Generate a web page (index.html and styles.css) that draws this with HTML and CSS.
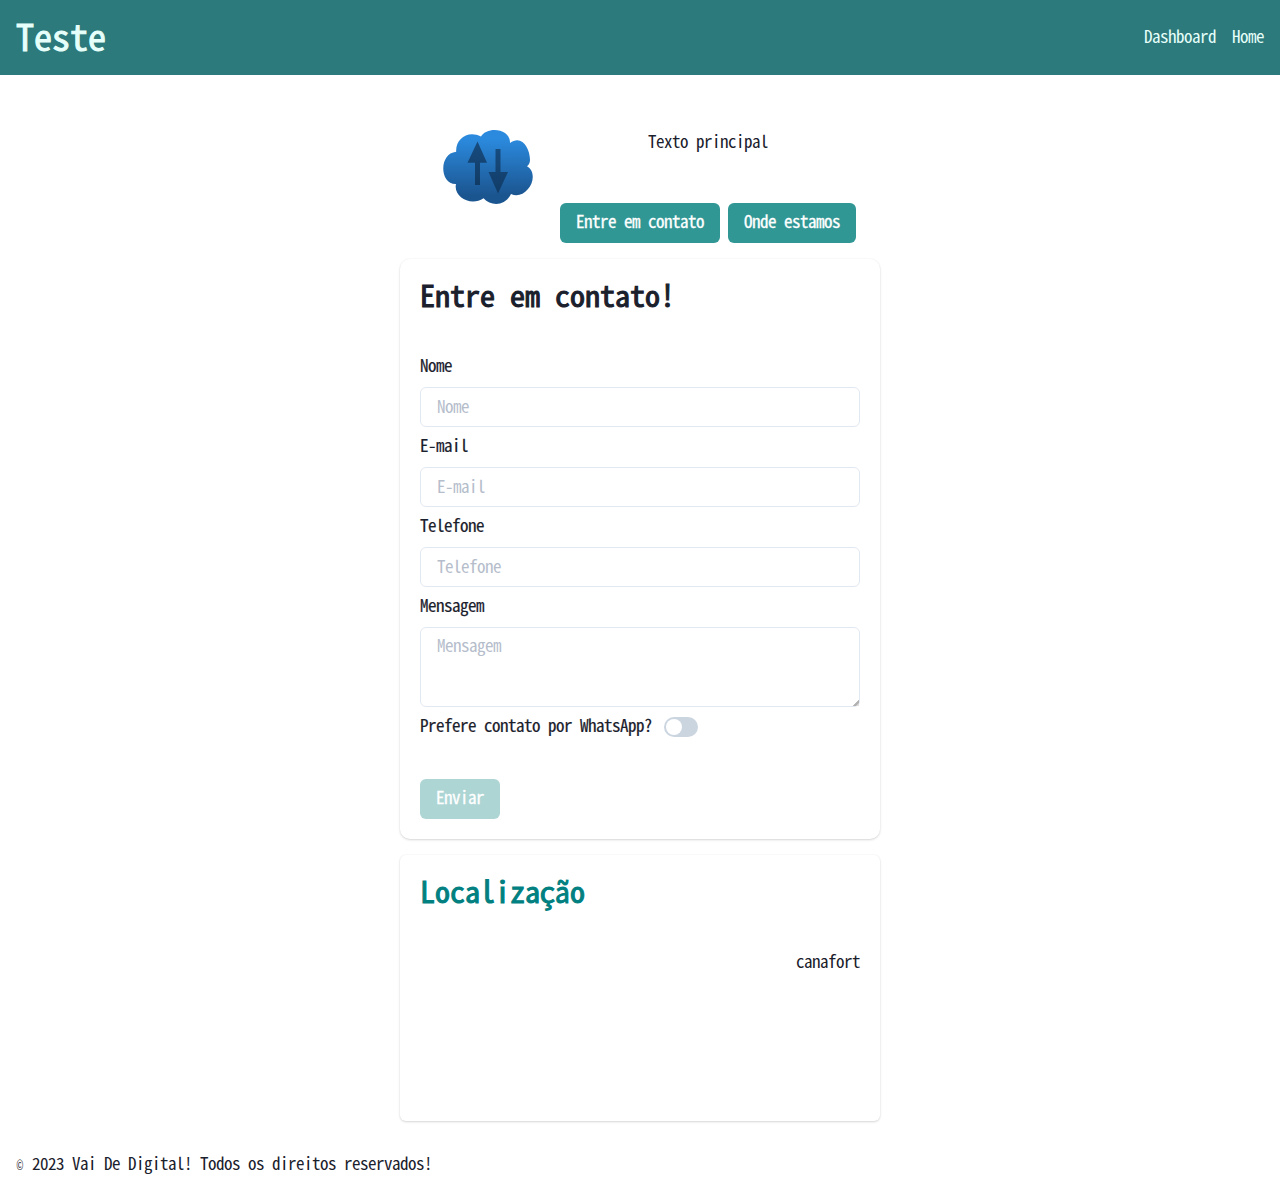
FILE: index.html
```html
<!DOCTYPE html>
<html lang="pt-BR">
<head>
<meta charset="utf-8">
<title>Teste</title>
<link rel="stylesheet" href="styles.css">
</head>
<body>
<header class="topbar">
  <h1 class="brand">Teste</h1>
  <nav class="nav"><a href="#">Dashboard</a><a href="#">Home</a></nav>
</header>
<main class="main">
  <section class="hero">
    <svg class="logo" viewBox="0 0 120 100" aria-hidden="true">
      <defs>
        <linearGradient id="cloud" x1="0" y1="0" x2="0" y2="1"><stop offset="0.12" stop-color="#2b8ade"/><stop offset="0.88" stop-color="#1b5590"/></linearGradient>
        <linearGradient id="arrow" x1="0" y1="0" x2="0" y2="1"><stop offset="0" stop-color="#174c7f"/><stop offset="1" stop-color="#113b66"/></linearGradient>
      </defs>
      <path fill="url(#cloud)" d="M26.200 36.800C25.200 24 38 14.500 51 21.500C57 11 80.500 13 80 28C91.500 19 100 33 100 45C100 47.500 99 50 97 51.200C105.500 56 103.500 68 98 74C93 79.800 87 81.800 81 79C75 91.500 61 91.500 53.500 83.300C41 92 23 82 26 69C9.500 69.500 8.500 38.500 26.200 36.800Z"/>
      <path fill="url(#arrow)" d="M47.500 26.500L57 47.700H50V70H45V47.700H37.500Z"/>
      <path fill="url(#arrow)" d="M65.500 34H70.500V57H78L68 78.500L58.500 57H65.500Z"/>
    </svg>
    <div class="intro">
      <p class="lead">Texto principal</p>
      <div class="actions"><a class="button" href="#contato">Entre em contato</a><a class="button" href="#local">Onde estamos</a></div>
    </div>
  </section>
  <section class="card contact" id="contato">
    <h2 class="title">Entre em contato!</h2>
    <form class="form">
      <label class="label" for="nome">Nome</label>
      <input class="field" id="nome" placeholder="Nome">
      <label class="label" for="email">E-mail</label>
      <input class="field" id="email" type="email" placeholder="E-mail">
      <label class="label" for="fone">Telefone</label>
      <input class="field" id="fone" type="tel" placeholder="Telefone">
      <label class="label" for="msg">Mensagem</label>
      <textarea class="field area" id="msg" placeholder="Mensagem"></textarea>
      <div class="choice"><label class="label" for="whats">Prefere contato por WhatsApp?</label><button class="switch" id="whats" type="button" role="switch" aria-checked="false"><span class="thumb"></span></button></div>
      <button class="button submit" type="submit" disabled>Enviar</button>
    </form>
  </section>
  <section class="card location" id="local">
    <h2 class="title place">Localiza<span class="cell">ç</span><span class="cell"><span class="tilde">ã</span></span>o</h2>
    <p class="address">canafort</p>
  </section>
</main>
<footer class="footer"><span class="cell narrow"><span class="copy">©</span></span> 2023 Vai De Digital! Todos os direitos reservados!</footer>
</body>
</html>
```
FILE: styles.css
```css
* { box-sizing: border-box; margin: 0; padding: 0; }
body {
  font: 400 17px/24px "Noto Sans Mono CJK JP", "Noto Sans Mono CJK SC", "Liberation Mono", monospace;
  letter-spacing: -.5px;
  color: #1a202c;
  background: #fff;
}
input, textarea, button { font: inherit; color: inherit; letter-spacing: inherit; }
a { color: inherit; text-decoration: none; }
.topbar { display: flex; align-items: center; justify-content: space-between; height: 75px; padding: 0 16px 4px; background: #2c7a7b; color: #e6fffa; }
.brand { font-size: 36px; line-height: 43px; letter-spacing: 0; font-weight: 400; -webkit-text-stroke: 1px currentColor; }
.nav { display: flex; gap: 16px; }
.main { width: 480px; margin: 0 auto; padding-top: 40px; display: flex; flex-direction: column; gap: 16px; }
.hero { display: flex; height: 128px; padding-left: 30px; gap: 10px; }
.logo { width: 120px; height: 100px; flex: none; }
.intro { width: 296px; display: flex; flex-direction: column; justify-content: space-between; padding-top: 14px; text-align: center; }
.actions { display: flex; gap: 8px; }
.button { height: 40px; line-height: 36px; padding: 0 16px 4px; border: 0; border-radius: 6px; background: #319795; color: #fff; font-weight: 400; -webkit-text-stroke: .3px currentColor; white-space: nowrap; }
.card { padding: 20px; border-radius: 6px; box-shadow: 0 1px 3px rgba(0, 0, 0, .1), 0 1px 2px rgba(0, 0, 0, .06), 0 0 2px rgba(0, 0, 0, .05); }
.contact { height: 580px; border-radius: 10px; }
.location { height: 266px; }
.title { font-size: 30px; line-height: 31px; letter-spacing: 0; margin-bottom: 5px; font-weight: 400; -webkit-text-stroke: 1.1px currentColor; }
.place { color: #008080; }
.cell { display: inline-flex; justify-content: center; width: .5em; }
.tilde { transform: scaleX(.88); }
.narrow { width: 8px; letter-spacing: 0; }
.copy { flex: none; font-size: 14px; transform: scaleX(.62); }
.form { display: flex; flex-direction: column; padding-top: 40px; }
.label { line-height: 20px; margin-bottom: 12px; -webkit-text-stroke: .2px currentColor; }
.field { width: 100%; height: 40px; padding: 0 16px 4px; margin-bottom: 8px; border: 1px solid #e2e8f0; border-radius: 6px; background: #fff; outline: 0; }
.field::placeholder { color: #b5bdcb; opacity: 1; }
.area { height: 80px; padding: 5px 16px; resize: vertical; }
.area::-webkit-resizer { background: linear-gradient(135deg, transparent 50%, #bbb 50%, #aaa 65%, #ddd 80%) right bottom / 6px 6px no-repeat; }
.choice { display: flex; align-items: center; height: 24px; gap: 12px; }
.choice .label { margin: 0; padding-bottom: 4px; }
.switch { width: 34px; height: 20px; padding: 2px; border: 0; border-radius: 10px; background: #cbd5e0; display: flex; }
.thumb { width: 16px; height: 16px; border-radius: 50%; background: #fff; }
.submit { align-self: flex-start; margin-top: 40px; opacity: .4; }
.address { padding-top: 38px; text-align: right; }
.footer { padding: 30px 16px 18px; }
```
